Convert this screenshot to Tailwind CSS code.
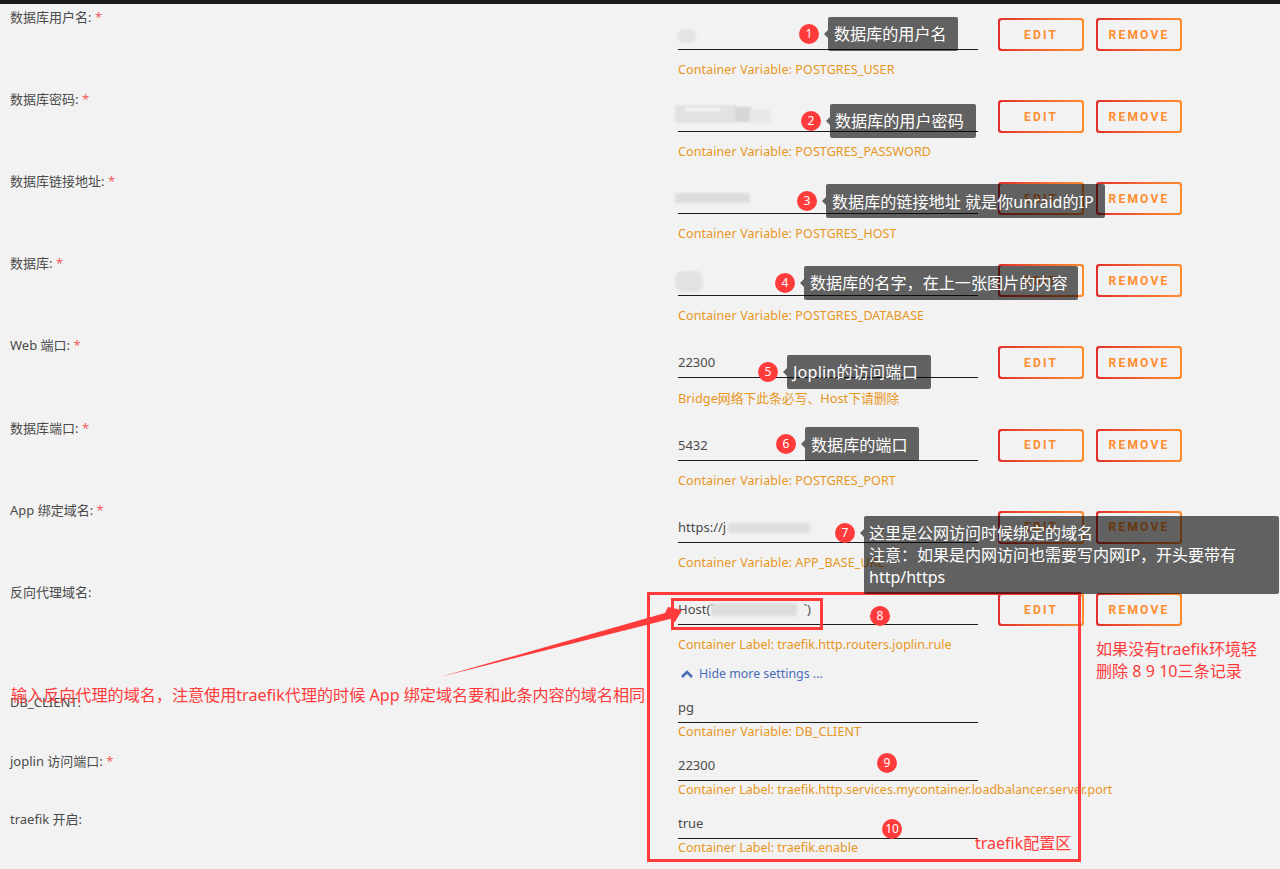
<!DOCTYPE html>
<html lang="zh">
<head>
<meta charset="utf-8">
<title>Joplin</title>
<script src="https://cdn.jsdelivr.net/npm/@tailwindcss/browser@4"></script>
</head>
<body class="m-0">
<div class="relative w-[1280px] h-[869px] overflow-hidden bg-[#f2f2f2] text-[#4a4a4a] text-[13px] leading-[18px] font-['Noto_Sans','Noto_Sans_CJK_SC',sans-serif]">
  <div class="h-[4px] bg-[#1a1a1a]"></div>

  <!-- rows -->
  <div class="flex h-[82.1px]">
    <div class="w-[678px] pl-[10px] pt-[4px]">数据库用户名: <span class="text-[#f25c5c]">*</span></div>
    <div class="w-[300px]"><div class="h-[46px] border-b border-[#1c1c1c]"></div><div class="mt-[11px] text-[#e8961e] text-[12.5px] tracking-[0.1px]">Container Variable: POSTGRES_USER</div></div>
    <div class="flex gap-[12px] ml-[20px] mt-[14px]">
      <div class="w-[86px] h-[33px] p-[2px] rounded-[3px] bg-linear-to-r from-[#e22d2d] to-[#ff8c2f]"><div class="h-full rounded-[2px] bg-[#f2f2f2] flex items-center justify-center text-[#ff8c2f] font-['Roboto'] font-bold tracking-[2.2px] text-[12px]">EDIT</div></div>
      <div class="w-[86px] h-[33px] p-[2px] rounded-[3px] bg-linear-to-r from-[#e22d2d] to-[#ff8c2f]"><div class="h-full rounded-[2px] bg-[#f2f2f2] flex items-center justify-center text-[#ff8c2f] font-['Roboto'] font-bold tracking-[2.2px] text-[12px]">REMOVE</div></div>
    </div>
  </div>
  <div class="flex h-[82.1px]">
    <div class="w-[678px] pl-[10px] pt-[4px]">数据库密码: <span class="text-[#f25c5c]">*</span></div>
    <div class="w-[300px]"><div class="h-[46px] border-b border-[#1c1c1c]"></div><div class="mt-[11px] text-[#e8961e] text-[12.5px] tracking-[0.1px]">Container Variable: POSTGRES_PASSWORD</div></div>
    <div class="flex gap-[12px] ml-[20px] mt-[14px]">
      <div class="w-[86px] h-[33px] p-[2px] rounded-[3px] bg-linear-to-r from-[#e22d2d] to-[#ff8c2f]"><div class="h-full rounded-[2px] bg-[#f2f2f2] flex items-center justify-center text-[#ff8c2f] font-['Roboto'] font-bold tracking-[2.2px] text-[12px]">EDIT</div></div>
      <div class="w-[86px] h-[33px] p-[2px] rounded-[3px] bg-linear-to-r from-[#e22d2d] to-[#ff8c2f]"><div class="h-full rounded-[2px] bg-[#f2f2f2] flex items-center justify-center text-[#ff8c2f] font-['Roboto'] font-bold tracking-[2.2px] text-[12px]">REMOVE</div></div>
    </div>
  </div>
  <div class="flex h-[82.1px]">
    <div class="w-[678px] pl-[10px] pt-[4px]">数据库链接地址: <span class="text-[#f25c5c]">*</span></div>
    <div class="w-[300px]"><div class="h-[46px] border-b border-[#1c1c1c]"></div><div class="mt-[11px] text-[#e8961e] text-[12.5px] tracking-[0.1px]">Container Variable: POSTGRES_HOST</div></div>
    <div class="flex gap-[12px] ml-[20px] mt-[14px]">
      <div class="w-[86px] h-[33px] p-[2px] rounded-[3px] bg-linear-to-r from-[#e22d2d] to-[#ff8c2f]"><div class="h-full rounded-[2px] bg-[#f2f2f2] flex items-center justify-center text-[#ff8c2f] font-['Roboto'] font-bold tracking-[2.2px] text-[12px]">EDIT</div></div>
      <div class="w-[86px] h-[33px] p-[2px] rounded-[3px] bg-linear-to-r from-[#e22d2d] to-[#ff8c2f]"><div class="h-full rounded-[2px] bg-[#f2f2f2] flex items-center justify-center text-[#ff8c2f] font-['Roboto'] font-bold tracking-[2.2px] text-[12px]">REMOVE</div></div>
    </div>
  </div>
  <div class="flex h-[82.1px]">
    <div class="w-[678px] pl-[10px] pt-[4px]">数据库: <span class="text-[#f25c5c]">*</span></div>
    <div class="w-[300px]"><div class="h-[46px] border-b border-[#1c1c1c]"></div><div class="mt-[11px] text-[#e8961e] text-[12.5px] tracking-[0.1px]">Container Variable: POSTGRES_DATABASE</div></div>
    <div class="flex gap-[12px] ml-[20px] mt-[14px]">
      <div class="w-[86px] h-[33px] p-[2px] rounded-[3px] bg-linear-to-r from-[#e22d2d] to-[#ff8c2f]"><div class="h-full rounded-[2px] bg-[#f2f2f2] flex items-center justify-center text-[#ff8c2f] font-['Roboto'] font-bold tracking-[2.2px] text-[12px]">EDIT</div></div>
      <div class="w-[86px] h-[33px] p-[2px] rounded-[3px] bg-linear-to-r from-[#e22d2d] to-[#ff8c2f]"><div class="h-full rounded-[2px] bg-[#f2f2f2] flex items-center justify-center text-[#ff8c2f] font-['Roboto'] font-bold tracking-[2.2px] text-[12px]">REMOVE</div></div>
    </div>
  </div>
  <div class="flex h-[82.5px]">
    <div class="w-[678px] pl-[10px] pt-[4px]">Web 端口: <span class="text-[#f25c5c]">*</span></div>
    <div class="w-[300px]"><div class="h-[46px] border-b border-[#1c1c1c] flex items-end pb-[6px]">22300</div><div class="mt-[11px] text-[#e8961e] text-[12.8px]">Bridge网络下此条必写、Host下请删除</div></div>
    <div class="flex gap-[12px] ml-[20px] mt-[14px]">
      <div class="w-[86px] h-[33px] p-[2px] rounded-[3px] bg-linear-to-r from-[#e22d2d] to-[#ff8c2f]"><div class="h-full rounded-[2px] bg-[#f2f2f2] flex items-center justify-center text-[#ff8c2f] font-['Roboto'] font-bold tracking-[2.2px] text-[12px]">EDIT</div></div>
      <div class="w-[86px] h-[33px] p-[2px] rounded-[3px] bg-linear-to-r from-[#e22d2d] to-[#ff8c2f]"><div class="h-full rounded-[2px] bg-[#f2f2f2] flex items-center justify-center text-[#ff8c2f] font-['Roboto'] font-bold tracking-[2.2px] text-[12px]">REMOVE</div></div>
    </div>
  </div>
  <div class="flex h-[82.1px]">
    <div class="w-[678px] pl-[10px] pt-[4px]">数据库端口: <span class="text-[#f25c5c]">*</span></div>
    <div class="w-[300px]"><div class="h-[46px] border-b border-[#1c1c1c] flex items-end pb-[6px]">5432</div><div class="mt-[11px] text-[#e8961e] text-[12.5px] tracking-[0.1px]">Container Variable: POSTGRES_PORT</div></div>
    <div class="flex gap-[12px] ml-[20px] mt-[14px]">
      <div class="w-[86px] h-[33px] p-[2px] rounded-[3px] bg-linear-to-r from-[#e22d2d] to-[#ff8c2f]"><div class="h-full rounded-[2px] bg-[#f2f2f2] flex items-center justify-center text-[#ff8c2f] font-['Roboto'] font-bold tracking-[2.2px] text-[12px]">EDIT</div></div>
      <div class="w-[86px] h-[33px] p-[2px] rounded-[3px] bg-linear-to-r from-[#e22d2d] to-[#ff8c2f]"><div class="h-full rounded-[2px] bg-[#f2f2f2] flex items-center justify-center text-[#ff8c2f] font-['Roboto'] font-bold tracking-[2.2px] text-[12px]">REMOVE</div></div>
    </div>
  </div>
  <div class="flex h-[82.1px]">
    <div class="w-[678px] pl-[10px] pt-[4px]">App 绑定域名: <span class="text-[#f25c5c]">*</span></div>
    <div class="w-[300px]"><div class="h-[46px] border-b border-[#1c1c1c] flex items-end pb-[6px]">https://j</div><div class="mt-[11px] text-[#e8961e] text-[12.5px] tracking-[0.1px]">Container Variable: APP_BASE_URL</div></div>
    <div class="flex gap-[12px] ml-[20px] mt-[14px]">
      <div class="w-[86px] h-[33px] p-[2px] rounded-[3px] bg-linear-to-r from-[#e22d2d] to-[#ff8c2f]"><div class="h-full rounded-[2px] bg-[#f2f2f2] flex items-center justify-center text-[#ff8c2f] font-['Roboto'] font-bold tracking-[2.2px] text-[12px]">EDIT</div></div>
      <div class="w-[86px] h-[33px] p-[2px] rounded-[3px] bg-linear-to-r from-[#e22d2d] to-[#ff8c2f]"><div class="h-full rounded-[2px] bg-[#f2f2f2] flex items-center justify-center text-[#ff8c2f] font-['Roboto'] font-bold tracking-[2.2px] text-[12px]">REMOVE</div></div>
    </div>
  </div>
  <div class="flex h-[82.1px]">
    <div class="w-[678px] pl-[10px] pt-[4px]">反向代理域名:</div>
    <div class="w-[300px]"><div class="h-[46px] border-b border-[#1c1c1c] flex items-end pb-[6px]"><div class="w-[133px] flex justify-between"><span>Host(`</span><span>`)</span></div></div><div class="mt-[11px] text-[#e8961e] text-[12.5px]">Container Label: traefik.http.routers.joplin.rule</div></div>
    <div class="flex gap-[12px] ml-[20px] mt-[14px]">
      <div class="w-[86px] h-[33px] p-[2px] rounded-[3px] bg-linear-to-r from-[#e22d2d] to-[#ff8c2f]"><div class="h-full rounded-[2px] bg-[#f2f2f2] flex items-center justify-center text-[#ff8c2f] font-['Roboto'] font-bold tracking-[2.2px] text-[12px]">EDIT</div></div>
      <div class="w-[86px] h-[33px] p-[2px] rounded-[3px] bg-linear-to-r from-[#e22d2d] to-[#ff8c2f]"><div class="h-full rounded-[2px] bg-[#f2f2f2] flex items-center justify-center text-[#ff8c2f] font-['Roboto'] font-bold tracking-[2.2px] text-[12px]">REMOVE</div></div>
    </div>
  </div>

  <div class="h-[25.8px] pl-[680px] flex items-center gap-[5px] text-[#4a6cb8] text-[12.4px]">
    <svg class="w-[14px] h-[10px]" viewBox="0 0 14 10" fill="none" stroke="#4a6cb8" stroke-width="2.6"><path d="M2 8 L7 3 L12 8"/></svg>
    <span>Hide more settings ...</span>
  </div>

  <div class="flex h-[58px]">
    <div class="w-[678px] pl-[10px] pt-[6px]">DB_CLIENT:</div>
    <div class="w-[300px]"><div class="h-[36px] border-b border-[#1c1c1c] flex items-end pb-[6px]">pg</div><div class="text-[#e8961e] text-[12.5px] tracking-[0.1px]">Container Variable: DB_CLIENT</div></div>
  </div>
  <div class="flex h-[58px]">
    <div class="w-[678px] pl-[10px] pt-[7px]">joplin 访问端口: <span class="text-[#f25c5c]">*</span></div>
    <div class="w-[300px]"><div class="h-[36px] border-b border-[#1c1c1c] flex items-end pb-[6px]">22300</div><div class="text-[#e8961e] text-[12.5px] whitespace-nowrap">Container Label: traefik.http.services.mycontainer.loadbalancer.server.port</div></div>
  </div>
  <div class="flex h-[58px]">
    <div class="w-[678px] pl-[10px] pt-[7px]">traefik 开启:</div>
    <div class="w-[300px]"><div class="h-[36px] border-b border-[#1c1c1c] flex items-end pb-[6px]">true</div><div class="text-[#e8961e] text-[12.5px]">Container Label: traefik.enable</div></div>
  </div>

  <!-- redaction smudges -->
  <div class="absolute left-[677px] top-[29px] w-[19px] h-[14px] rounded-full bg-[#e4e4e4] blur-[1px]"></div>
  <div class="absolute left-[675px] top-[105px] w-[62px] h-[18px] bg-[#e2e2e2] blur-[1px]"></div>
  <div class="absolute left-[685px] top-[108px] w-[35px] h-[3px] bg-[#f6f6f6] blur-[1px]"></div>
  <div class="absolute left-[735px] top-[107px] w-[16px] h-[15px] bg-[#d6d6d6] blur-[1px]"></div>
  <div class="absolute left-[750px] top-[110px] w-[20px] h-[13px] bg-[#e6e6e6] blur-[1.5px]"></div>
  <div class="absolute left-[675px] top-[193px] w-[75px] h-[10px] bg-[#dcdcdc] blur-[1.5px]"></div>
  <div class="absolute left-[675px] top-[271px] w-[28px] h-[21px] rounded-[8px] bg-[#e2e2e2] blur-[1px]"></div>
  <div class="absolute left-[728px] top-[523px] w-[82px] h-[10px] bg-[#dedede] blur-[1.5px]"></div>
  <div class="absolute left-[711px] top-[603px] w-[86px] h-[13px] bg-[#dcdcdc] blur-[1.5px]"></div>

  <!-- red frames -->
  <div class="absolute left-[647px] top-[592px] w-[434px] h-[270px] border-[3px] border-[#ff3b3b]"></div>
  <div class="absolute left-[671px] top-[598px] w-[152px] h-[32px] border-[3px] border-[#ff3b3b]"></div>

  <!-- arrow -->
  <svg class="absolute left-0 top-0 w-[1280px] h-[869px]" viewBox="0 0 1280 869">
    <polygon fill="#ff3b3b" points="440,677 665,613 668,607 682,610 675,622 670,619"/>
  </svg>

  <!-- badges + tooltips -->
  <div class="absolute left-[799px] top-[24px] w-[20px] h-[20px] rounded-full bg-[#ff3b3b] text-white text-[12px] flex items-center justify-center">1</div>
  <div class="absolute left-[828px] top-[17px] h-[34px] pl-[6px] w-[130px] flex items-center rounded-[2px] bg-black/60 text-white text-[16.1px] whitespace-nowrap before:absolute before:left-[-4px] before:top-[13px] before:border-y-[4px] before:border-r-[4px] before:border-y-transparent before:border-r-black/60">数据库的用户名</div>

  <div class="absolute left-[801px] top-[111px] w-[20px] h-[20px] rounded-full bg-[#ff3b3b] text-white text-[12px] flex items-center justify-center">2</div>
  <div class="absolute left-[830px] top-[104px] h-[34px] pl-[5px] w-[146px] flex items-center rounded-[2px] bg-black/60 text-white text-[16.1px] whitespace-nowrap before:absolute before:left-[-4px] before:top-[13px] before:border-y-[4px] before:border-r-[4px] before:border-y-transparent before:border-r-black/60">数据库的用户密码</div>

  <div class="absolute left-[797px] top-[191px] w-[20px] h-[20px] rounded-full bg-[#ff3b3b] text-white text-[12px] flex items-center justify-center">3</div>
  <div class="absolute left-[826px] top-[184px] h-[34px] pl-[6px] pt-[2px] w-[279px] flex items-center rounded-[2px] bg-black/60 text-white text-[16.1px] whitespace-nowrap before:absolute before:left-[-4px] before:top-[13px] before:border-y-[4px] before:border-r-[4px] before:border-y-transparent before:border-r-black/60">数据库的链接地址 就是你unraid的IP</div>

  <div class="absolute left-[775px] top-[273px] w-[20px] h-[20px] rounded-full bg-[#ff3b3b] text-white text-[12px] flex items-center justify-center">4</div>
  <div class="absolute left-[804px] top-[266px] h-[34px] pl-[6px] w-[274px] flex items-center rounded-[2px] bg-black/60 text-white text-[16.1px] whitespace-nowrap before:absolute before:left-[-4px] before:top-[13px] before:border-y-[4px] before:border-r-[4px] before:border-y-transparent before:border-r-black/60">数据库的名字，在上一张图片的内容</div>

  <div class="absolute left-[758px] top-[362px] w-[20px] h-[20px] rounded-full bg-[#ff3b3b] text-white text-[12px] flex items-center justify-center">5</div>
  <div class="absolute left-[787px] top-[355px] h-[34px] pl-[6px] w-[144px] flex items-center rounded-[2px] bg-black/60 text-white text-[16.1px] tracking-[0.2px] whitespace-nowrap before:absolute before:left-[-4px] before:top-[13px] before:border-y-[4px] before:border-r-[4px] before:border-y-transparent before:border-r-black/60">Joplin的访问端口</div>

  <div class="absolute left-[776px] top-[434px] w-[20px] h-[20px] rounded-full bg-[#ff3b3b] text-white text-[12px] flex items-center justify-center">6</div>
  <div class="absolute left-[805px] top-[427px] h-[34px] pl-[6px] pt-[2px] w-[114px] flex items-center rounded-[2px] bg-black/60 text-white text-[16.1px] whitespace-nowrap before:absolute before:left-[-4px] before:top-[13px] before:border-y-[4px] before:border-r-[4px] before:border-y-transparent before:border-r-black/60">数据库的端口</div>

  <div class="absolute left-[835px] top-[523px] w-[20px] h-[20px] rounded-full bg-[#ff3b3b] text-white text-[12px] flex items-center justify-center">7</div>
  <div class="absolute left-[864px] top-[516px] h-[78px] pl-[5px] pt-[6px] w-[415px] rounded-[2px] bg-black/60 text-white text-[16px] leading-[22px] before:absolute before:left-[-4px] before:top-[13px] before:border-y-[4px] before:border-r-[4px] before:border-y-transparent before:border-r-black/60">这里是公网访问时候绑定的域名<br>注意：如果是内网访问也需要写内网IP，开头要带有<br>http/https</div>

  <div class="absolute left-[870px] top-[606px] w-[20px] h-[20px] rounded-full bg-[#ff3b3b] text-white text-[12px] flex items-center justify-center">8</div>
  <div class="absolute left-[877px] top-[753px] w-[20px] h-[20px] rounded-full bg-[#ff3b3b] text-white text-[12px] flex items-center justify-center">9</div>
  <div class="absolute left-[882px] top-[819px] w-[20px] h-[20px] rounded-full bg-[#ff3b3b] text-white text-[12px] flex items-center justify-center">10</div>

  <!-- red notes -->
  <div class="absolute left-[11px] top-[684px] text-[#ff3b3b] text-[16.1px] leading-[22px] whitespace-nowrap">输入反向代理的域名，注意使用traefik代理的时候 App 绑定域名要和此条内容的域名相同</div>
  <div class="absolute left-[1096px] top-[638px] text-[#ff3b3b] text-[16.1px] leading-[22px] whitespace-nowrap">如果没有traefik环境轻<br>删除 8 9 10三条记录</div>
  <div class="absolute left-[975px] top-[832px] text-[#ff3b3b] text-[16px] leading-[22px] whitespace-nowrap">traefik配置区</div>
</div>
</body>
</html>
